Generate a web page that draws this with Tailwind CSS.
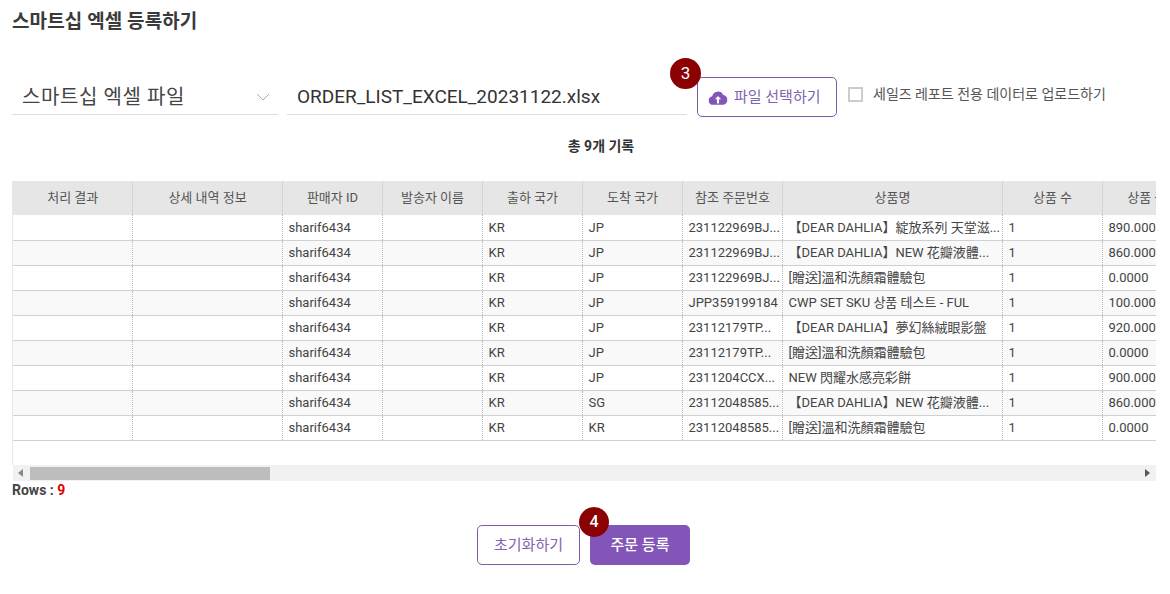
<!DOCTYPE html>
<html lang="ko">
<head>
  <meta charset="UTF-8" />
  <title>스마트십 엑셀 등록하기</title>
  <script src="https://cdn.jsdelivr.net/npm/@tailwindcss/browser@4"></script>
</head>
<body class="bg-white overflow-hidden font-['Roboto','Noto_Sans_CJK_KR',sans-serif] text-[#333]">
  <div class="w-[1170px] h-[594px] pl-3 overflow-hidden">
    <h1 class="text-[19px] leading-[24px] tracking-[0.1px] font-bold text-[#3a3a3a] pt-[10px]">스마트십 엑셀 등록하기</h1>

    <!-- 파일 선택 -->
    <div class="flex items-start mt-[41px] h-[42px]">
      <div class="w-[266px] h-10 border-b border-[#ddd] flex items-center justify-between pl-[10px] pr-2 pt-[5px] text-[20px] tracking-[0.6px] text-[#444]">
        <span>스마트십 엑셀 파일</span>
        <svg width="14" height="8" viewBox="0 0 14 8" fill="none" stroke="#aaa" stroke-width="1"><path d="M1 1l6 6 6-6" /></svg>
      </div>
      <div class="w-[400px] h-10 ml-[9px] border-b border-[#ddd] flex items-center pl-[10px] pt-[5px] text-[19px] text-[#333]">ORDER_LIST_EXCEL_20231122.xlsx</div>
      <div class="relative ml-[10px] mt-[2px]">
        <button class="w-[140px] h-10 rounded-[5px] border border-[#7e5ca8] flex items-center gap-[6px] pl-[10px] text-[15px] text-[#7f65ad] bg-white">
          <svg width="20" height="15" viewBox="0 0 19 14"><path fill="#8355b9" d="M5 14a4.200 4.200 0 0 1-1-8.300A5.600 5.600 0 0 1 14.500 4.600 4.800 4.800 0 0 1 14.500 14z" /><path fill="#fff" d="M9.500 5.500l3 3.200h-2v4h-2v-4h-2z" /></svg>
          <span>파일 선택하기</span>
        </button>
        <span class="absolute left-[-27px] top-[-19px] w-[31px] h-[31px] rounded-full bg-[#8b0000] text-white text-[17px] flex items-center justify-center">3</span>
      </div>
      <div class="flex items-center ml-[11px] mt-[11px]">
        <span class="w-[15px] h-[15px] border-2 border-[#ccc] bg-white"></span>
        <span class="ml-[10px] text-[14px] leading-[16px] text-[#555]">세일즈 레포트 전용 데이터로 업로드하기</span>
      </div>
    </div>

    <p class="w-[1178px] text-center text-[14px] leading-[18px] font-bold text-[#333] mt-[20px]">총 9개 기록</p>

    <!-- 그리드 -->
    <div class="w-[1144px] mt-[26px] overflow-hidden">
      <div class="h-[284px] overflow-hidden border-l border-[#e8e8e8]">
        <table class="table-fixed w-[1189px] border-collapse text-[13px]">
          <thead>
            <tr class="h-[34px] bg-[#e6e6e6] text-[#555]">
              <th class="w-[119px] pl-px font-normal border-r border-[#d4d4d4]">처리 결과</th>
              <th class="w-[150px] pl-px font-normal border-r border-[#d4d4d4]">상세 내역 정보</th>
              <th class="w-[100px] pl-px font-normal border-r border-[#d4d4d4]">판매자 ID</th>
              <th class="w-[100px] pl-px font-normal border-r border-[#d4d4d4]">발송자 이름</th>
              <th class="w-[100px] pl-px font-normal border-r border-[#d4d4d4]">출하 국가</th>
              <th class="w-[100px] pl-px font-normal border-r border-[#d4d4d4]">도착 국가</th>
              <th class="w-[100px] pl-px font-normal border-r border-[#d4d4d4]">참조 주문번호</th>
              <th class="w-[220px] pl-px font-normal border-r border-[#d4d4d4]">상품명</th>
              <th class="w-[100px] pl-px font-normal border-r border-[#d4d4d4]">상품 수</th>
              <th class="w-[100px] pl-px font-normal">상품 금액</th>
            </tr>
          </thead>
          <tbody id="rows"></tbody>
        </table>
      </div>
      <!-- 가로 스크롤바 -->
      <div class="h-4 ml-px bg-[#f1f1f1] flex items-center relative">
        <svg class="ml-[5px]" width="5" height="8" viewBox="0 0 5 8"><path fill="#888" d="M5 0v8L0 4z" /></svg>
        <div class="absolute left-[17px] top-[2px] w-[240px] h-[13px] bg-[#bdbdbd]"></div>
        <svg class="ml-auto mr-[6px]" width="5" height="8" viewBox="0 0 5 8"><path fill="#555" d="M0 0v8l5-4z" /></svg>
      </div>
    </div>
    <p class="text-[14px] leading-[16px] font-bold text-[#444] mt-[1px]">Rows : <span class="text-[#e00000]">9</span></p>

    <!-- 하단 버튼 -->
    <div class="flex justify-center gap-[10px] w-[1143px] mt-[27px]">
      <button class="w-[103px] h-10 rounded-[5px] border border-[#7e5ca8] bg-white text-[15px] text-[#7f65ad]">초기화하기</button>
      <div class="relative">
        <button class="w-[100px] h-10 rounded-[5px] bg-[#8355b9] text-white text-[15px] font-medium">주문 등록</button>
        <span class="absolute left-[-11px] top-[-18px] w-[30px] h-[30px] rounded-full bg-[#8b0000] text-white text-[16px] font-medium flex items-center justify-center">4</span>
      </div>
    </div>
  </div>

  <script>
    const data = [
      ["JP", "231122969BJ...", "【DEAR DAHLIA】綻放系列 天堂滋...", "890.000"],
      ["JP", "231122969BJ...", "【DEAR DAHLIA】NEW 花瓣液體...", "860.000"],
      ["JP", "231122969BJ...", "[贈送]溫和洗顏霜體驗包", "0.0000"],
      ["JP", "JPP359199184", "CWP SET SKU 상품 테스트 - FUL", "100.000"],
      ["JP", "23112179TP...", "【DEAR DAHLIA】夢幻絲絨眼影盤", "920.000"],
      ["JP", "23112179TP...", "[贈送]溫和洗顏霜體驗包", "0.0000"],
      ["JP", "2311204CCX...", "NEW 閃耀水感亮彩餅", "900.000"],
      ["SG", "23112048585...", "【DEAR DAHLIA】NEW 花瓣液體...", "860.000"],
      ["KR", "23112048585...", "[贈送]溫和洗顏霜體驗包", "0.0000"]
    ];
    const cell = "border-r border-dotted border-[#bbb] pl-[6px] whitespace-nowrap overflow-hidden";
    document.getElementById("rows").innerHTML = data.map((r, i) => `
      <tr class="h-[25px] border-b border-[#d0d0d0] text-[#444] ${i % 2 ? "bg-[#f9f9f9]" : "bg-white"}">
        <td class="${cell}"></td>
        <td class="${cell}"></td>
        <td class="${cell}">sharif6434</td>
        <td class="${cell}"></td>
        <td class="${cell}">KR</td>
        <td class="${cell}">${r[0]}</td>
        <td class="${cell}">${r[1]}</td>
        <td class="${cell} font-['Roboto','Noto_Sans_CJK_TC',sans-serif]">${r[2]}</td>
        <td class="${cell}">1</td>
        <td class="pl-[6px]">${r[3]}</td>
      </tr>`).join("");
  </script>
</body>
</html>
